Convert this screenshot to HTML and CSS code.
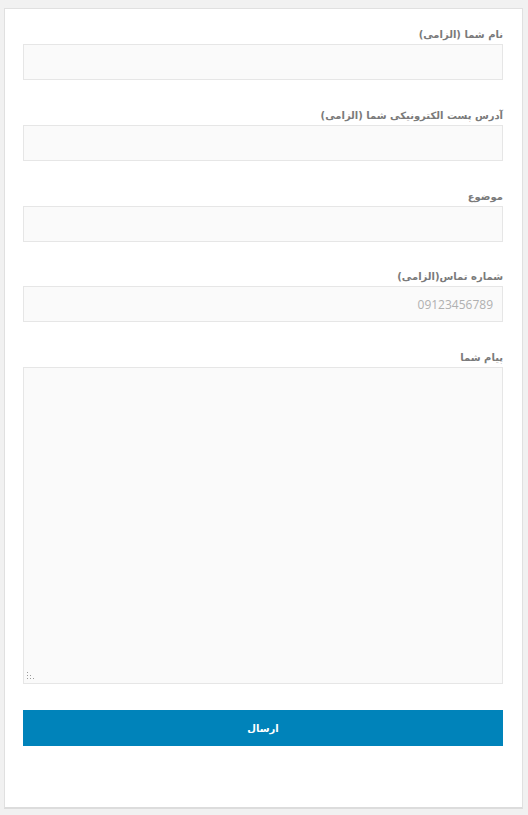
FILE: index.html
```html
<!DOCTYPE html>
<html lang="fa" dir="rtl">
<head>
<meta charset="utf-8">
<title>تماس با ما</title>
<link rel="stylesheet" href="styles.css">
</head>
<body>
<div class="card">
  <form class="form">
    <div class="field">
      <label class="label">نام شما (الزامی)</label>
      <input class="input" type="text">
    </div>
    <div class="field">
      <label class="label">آدرس پست الکترونیکی شما (الزامی)</label>
      <input class="input" type="email">
    </div>
    <div class="field field-tight">
      <label class="label">موضوع</label>
      <input class="input" type="text">
    </div>
    <div class="field">
      <label class="label">شماره تماس(الزامی)</label>
      <input class="input input-tel" type="tel" placeholder="09123456789">
    </div>
    <div class="field field-tight">
      <label class="label">پیام شما</label>
      <div class="area-wrap">
        <textarea class="area"></textarea>
        <svg class="grip" width="9" height="9" viewBox="0 0 9 9">
          <rect x="0" y="0" width="1" height="1" fill="#9a9a9a"/>
          <rect x="0" y="3" width="1" height="1" fill="#9a9a9a"/>
          <rect x="3" y="3" width="1" height="1" fill="#9a9a9a"/>
          <rect x="0" y="6" width="1" height="1" fill="#9a9a9a"/>
          <rect x="3" y="6" width="1" height="1" fill="#9a9a9a"/>
          <rect x="6" y="6" width="1" height="1" fill="#9a9a9a"/>
        </svg>
      </div>
    </div>
    <button class="submit" type="button">ارسال</button>
  </form>
</div>
</body>
</html>
```
FILE: styles.css
```css
html, body {
  margin: 0;
  padding: 0;
  background: #f1f1f1;
}
body {
  padding: 8px 5px 0 4px;
  font-family: "DejaVu Sans", "Noto Sans", sans-serif;
}
.card {
  width: 519px;
  height: 801px;
  box-sizing: border-box;
  background: #fff;
  border: 1px solid #e0e0e0;
  border-bottom: 2px solid #dcdcdc;
  padding: 17px 19px 0 18px;
}
.form {
  display: flex;
  flex-direction: column;
  width: 480px;
}
.field {
  display: flex;
  flex-direction: column;
  margin-bottom: 27px;
}
.field-tight {
  margin-bottom: 26px;
}
.label {
  font-size: 10px;
  font-weight: bold;
  color: #7a7a7a;
  line-height: 18px;
  height: 18px;
}
.input {
  box-sizing: border-box;
  width: 480px;
  height: 36px;
  margin: 0;
  border: 1px solid #e6e6e6;
  background: #fafafa;
  outline: none;
  padding: 0 9px;
  font-family: "Open Sans", sans-serif;
  font-size: 12px;
  text-align: right;
}
.input-tel::placeholder {
  color: #b0b0b0;
  text-align: right;
}
.area-wrap {
  position: relative;
  width: 480px;
  height: 317px;
}
.area {
  display: block;
  box-sizing: border-box;
  width: 480px;
  height: 317px;
  margin: 0;
  border: 1px solid #e6e6e6;
  background: #fafafa;
  outline: none;
  resize: none;
}
.grip {
  position: absolute;
  left: 4px;
  bottom: 3px;
}
.submit {
  width: 480px;
  height: 36px;
  margin: 0;
  border: 0;
  background: #0083ba;
  color: #fff;
  font-family: "DejaVu Sans", sans-serif;
  font-size: 10px;
  font-weight: bold;
  padding: 0;
}
```
